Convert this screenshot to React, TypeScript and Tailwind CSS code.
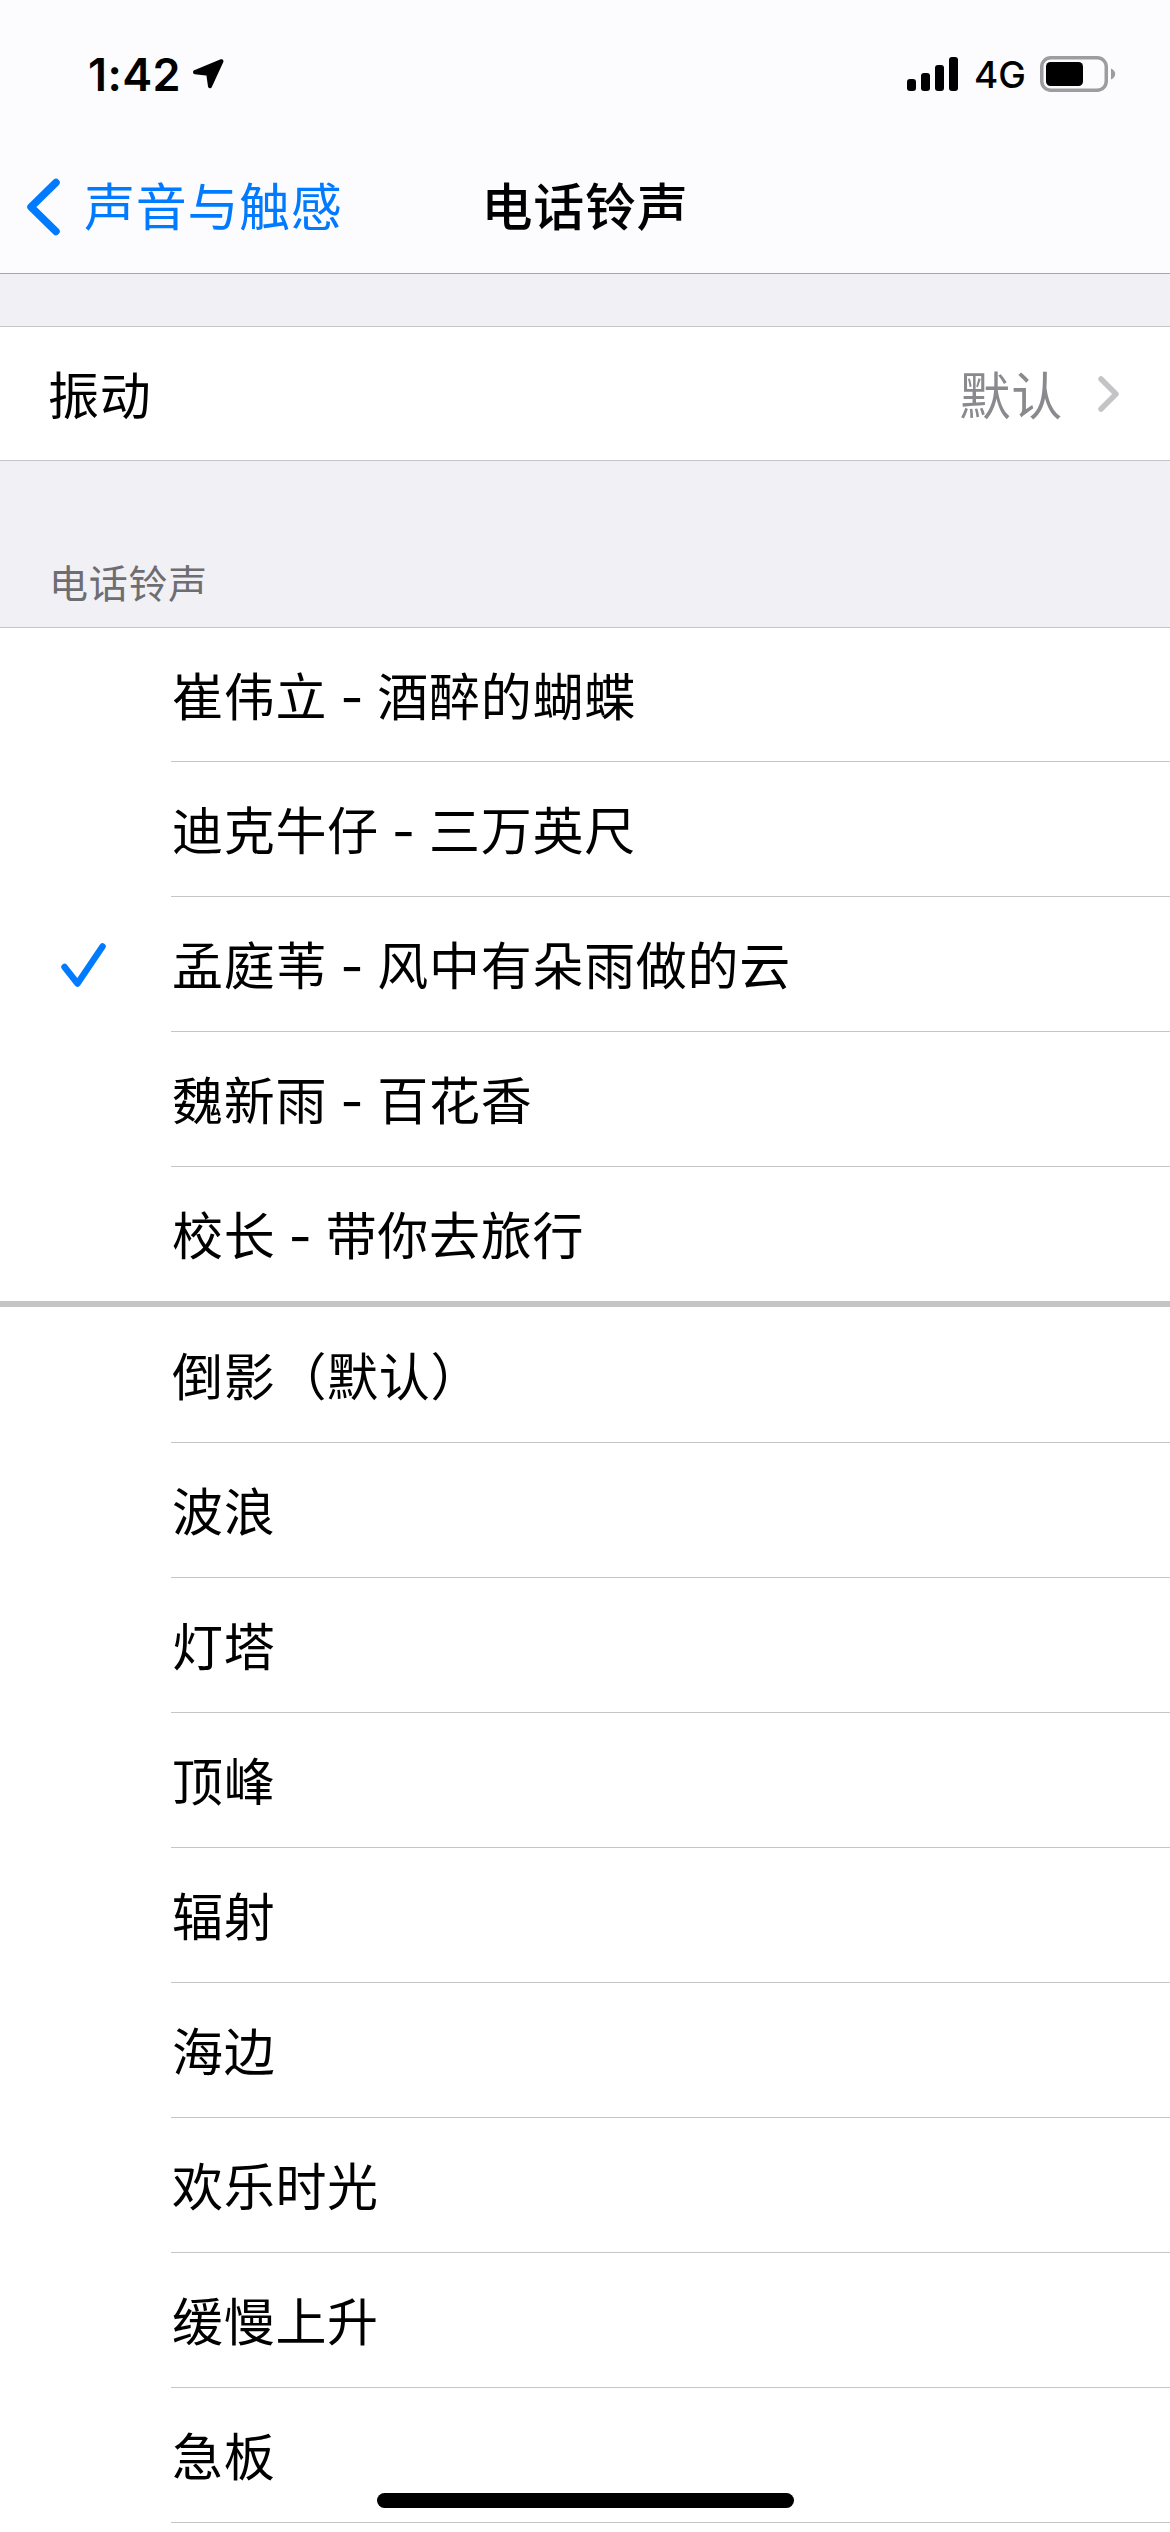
import clsx from 'clsx';

const customTones = [
  '崔伟立 - 酒醉的蝴蝶',
  '迪克牛仔 - 三万英尺',
  '孟庭苇 - 风中有朵雨做的云',
  '魏新雨 - 百花香',
  '校长 - 带你去旅行',
];

const builtInTones = ['倒影（默认）', '波浪', '灯塔', '顶峰', '辐射', '海边', '欢乐时光', '缓慢上升', '急板'];

const selected = '孟庭苇 - 风中有朵雨做的云';

function StatusBar() {
  return (
    <div className="flex h-[132px] items-start justify-between pl-[88px] pr-[54px] pt-[46px]">
      <div className="flex h-14 items-center">
        <span className="w-[102px] text-[45px] font-semibold leading-none tracking-[0.4px]">1:42</span>
        <svg className="h-9 w-9" viewBox="0 0 36 36">
          <path d="M5 16.2 31.5 5.2 20 30.2 18.2 17.8Z" fill="#000" stroke="#000" strokeWidth="4" strokeLinejoin="round" />
        </svg>
      </div>
      <div className="flex h-14 items-center">
        <svg className="h-9 w-[52px]" viewBox="0 0 52 36">
          <rect x="0" y="23" width="9" height="12" rx="3" />
          <rect x="14" y="17" width="9" height="18" rx="3" />
          <rect x="28" y="9" width="9" height="26" rx="3" />
          <rect x="42" y="1" width="9" height="34" rx="3" />
        </svg>
        <span className="ml-[15px] w-[66px] text-[37px] font-medium leading-none tracking-[0px]">4G</span>
        <svg className="h-9 w-[76px]" viewBox="0 0 76 36">
          <rect x="1.75" y="1.75" width="64.5" height="32.5" rx="9" fill="none" stroke="#9d9d9f" strokeWidth="3.5" />
          <rect x="6" y="6" width="37" height="24" rx="4.5" />
          <path d="M71 12.5c2.6 1 4.2 3 4.2 5.5s-1.6 4.500-4.2 5.500z" fill="#9d9d9f" />
        </svg>
      </div>
    </div>
  );
}

function NavBar() {
  return (
    <div className="grid h-[141px] grid-cols-3 items-start">
      <button className="flex h-[150px] items-center pl-[26px] text-[#007aff]">
        <svg className="h-[58px] w-[36px]" viewBox="0 0 36 58">
          <path d="M30 4.5 5 29l25 24.5" fill="none" stroke="currentColor" strokeWidth="7.5" strokeLinecap="round" strokeLinejoin="round" />
        </svg>
        <span className="ml-[22px] whitespace-nowrap">声音与触感</span>
      </button>
      <h1 className="flex h-[150px] items-center justify-center font-medium">电话铃声</h1>
    </div>
  );
}

function ToneRow({ name, className, last }: { name: string; className: string; last?: boolean }) {
  return (
    <li className={clsx('flex', className)}>
      <div className="flex w-[171px] items-center pl-[60px]">
        {name === selected && (
          <svg className="h-[48px] w-[48px]" viewBox="0 0 48 48">
            <path d="M4.5 26 17.5 42.500 42.500 5.500" fill="none" stroke="#007aff" strokeWidth="6.5" strokeLinecap="round" strokeLinejoin="round" />
          </svg>
        )}
      </div>
      <div className={clsx('flex flex-1 items-center border-[#c6c6c8] pl-px pt-[5px] [word-spacing:-2px]', !last && 'border-b')}>
        {name}
      </div>
    </li>
  );
}

export default function App() {
  return (
    <div className="relative h-[2532px] w-[1170px] overflow-hidden bg-[#f1f0f5] font-['Inter','Noto_Sans_CJK_SC',sans-serif] text-[51px] leading-none tracking-[0.7px] text-black">
      <header className="h-[274px] border-b border-[#a7a7ad] bg-[#fcfcfe]">
        <StatusBar />
        <NavBar />
      </header>

      <div className="mt-[52px] flex h-[135px] items-center border-y border-[#c6c6c8] bg-white pl-[48px] pr-[49px]">
        <span className="flex-1 pt-[5px]">振动</span>
        <span className="pt-[5px] text-[#8a8a8e]">默认</span>
        <svg className="ml-[34px] h-[38px] w-[24px]" viewBox="0 0 24 38">
          <path d="M4 4 19 19 4 34" fill="none" stroke="#c4c4c6" strokeWidth="5.5" strokeLinecap="round" strokeLinejoin="round" />
        </svg>
      </div>

      <h2 className="flex h-[166px] items-end pb-[24px] pl-[49px] text-[39px] text-[#6d6d72]">电话铃声</h2>

      <ul className="border-t border-[#c6c6c8] bg-white">
        {customTones.map((name, i) => {
          const last = i === customTones.length - 1;
          return <ToneRow key={name} name={name} last={last} className={i === 0 || last ? 'h-[134px]' : 'h-[135px]'} />;
        })}
      </ul>
      <ul className="border-t-[6px] border-[#c4c4c4] bg-white">
        {builtInTones.map((name, i) => (
          <ToneRow key={name} name={name} className={i === 0 ? 'h-[136px]' : 'h-[135px]'} />
        ))}
        <li className="h-[9px]" />
      </ul>

      {/* home indicator */}
      <div className="absolute bottom-[24px] left-[377px] h-[15px] w-[417px] rounded-full bg-black" />
    </div>
  );
}
